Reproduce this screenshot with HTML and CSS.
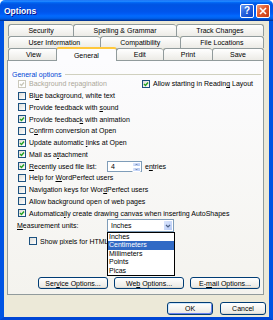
FILE: index.html
```html
<!DOCTYPE html>
<html lang="en">
<head>
  <meta charset="UTF-8" />
  <title>Options</title>
  <link rel="stylesheet" href="styles.css">
</head>
<body>
  <div class="window">
    <div class="titlebar">
      <span class="title">Options</span>
      <div class="controls">
        <span class="ctl help">?</span>
        <span class="ctl close">
          <svg width="8" height="8" viewBox="0 0 8 8"><path d="M1 1 L7 7 M7 1 L1 7" stroke="#fff" stroke-width="1.6"/></svg>
        </span>
      </div>
    </div>

    <div class="dialog">
      <div class="tabs">
        <div class="tab-row">
          <div class="tab">Security</div>
          <div class="tab">Spelling &amp; Grammar</div>
          <div class="tab">Track Changes</div>
        </div>
        <div class="tab-row">
          <div class="tab">User Information</div>
          <div class="tab">Compatibility</div>
          <div class="tab">File Locations</div>
        </div>
        <div class="tab-row">
          <div class="tab">View</div>
          <div class="tab active">General</div>
          <div class="tab">Edit</div>
          <div class="tab">Print</div>
          <div class="tab">Save</div>
        </div>
      </div>

      <div class="panel">
        <div class="group-label"><span>General options</span><span class="rule"></span></div>

        <div class="checks">
          <div class="row split">
            <label class="check disabled"><span class="box"><svg viewBox="0 0 6 6"><path d="M1 3 L2.5 4.5 L5 1.5"/></svg></span><span>Background repagination</span></label>
            <label class="check"><span class="box"><svg viewBox="0 0 6 6"><path d="M1 3 L2.5 4.5 L5 1.5"/></svg></span><span>Allow starting in Readin<u>g</u> Layout</span></label>
          </div>
          <div class="row"><label class="check"><span class="box"></span><span>Bl<u>u</u>e background, white text</span></label></div>
          <div class="row"><label class="check"><span class="box"></span><span>Provide feedback with <u>s</u>ound</span></label></div>
          <div class="row"><label class="check"><span class="box"><svg viewBox="0 0 6 6"><path d="M1 3 L2.5 4.5 L5 1.5"/></svg></span><span>Provide feedbac<u>k</u> with animation</span></label></div>
          <div class="row"><label class="check"><span class="box"></span><span>C<u>o</u>nfirm conversion at Open</span></label></div>
          <div class="row"><label class="check"><span class="box"><svg viewBox="0 0 6 6"><path d="M1 3 L2.5 4.5 L5 1.5"/></svg></span><span>Update automatic <u>l</u>inks at Open</span></label></div>
          <div class="row"><label class="check"><span class="box"><svg viewBox="0 0 6 6"><path d="M1 3 L2.5 4.5 L5 1.5"/></svg></span><span>Mail as a<u>t</u>tachment</span></label></div>
          <div class="row">
            <label class="check recent"><span class="box"><svg viewBox="0 0 6 6"><path d="M1 3 L2.5 4.5 L5 1.5"/></svg></span><span><u>R</u>ecently used file list:</span></label>
            <div class="spin">
              <span class="spin-value">4</span>
              <span class="spin-btns">
                <span class="spin-btn"><svg viewBox="0 0 6 4"><path d="M1.5 3 L3 1.5 L4.5 3"/></svg></span>
                <span class="spin-btn"><svg viewBox="0 0 6 4"><path d="M1.5 1 L3 2.5 L4.5 1"/></svg></span>
              </span>
            </div>
            <span class="after">e<u>n</u>tries</span>
          </div>
          <div class="row"><label class="check"><span class="box"></span><span>Help for <u>W</u>ordPerfect users</span></label></div>
          <div class="row"><label class="check"><span class="box"></span><span>Navigation keys for Wor<u>d</u>Perfect users</span></label></div>
          <div class="row"><label class="check"><span class="box"></span><span>Allow background open of web pages</span></label></div>
          <div class="row"><label class="check"><span class="box"><svg viewBox="0 0 6 6"><path d="M1 3 L2.5 4.5 L5 1.5"/></svg></span><span>Automatica<u>l</u>ly create drawing canvas when inserting AutoShapes</span></label></div>
        </div>

        <div class="measure">
          <span class="measure-label"><u>M</u>easurement units:</span>
          <div class="select">
            <span class="select-value">Inches</span>
            <span class="select-btn"><svg viewBox="0 0 8 6"><path d="M2 2 L4 4 L6 2"/></svg></span>
            <ul class="dropdown">
              <li>Inches</li>
              <li class="selected">Centimeters</li>
              <li>Millimeters</li>
              <li>Points</li>
              <li>Picas</li>
            </ul>
          </div>
        </div>

        <div class="row pixels"><label class="check"><span class="box"></span><span class="clip">Show pi<u>x</u>els for HTML features</span></label></div>

        <div class="panel-buttons">
          <button class="btn wide">Ser<u>v</u>ice Options...</button>
          <button class="btn wide">We<u>b</u> Options...</button>
          <button class="btn wide">E-<u>m</u>ail Options...</button>
        </div>
      </div>

      <div class="footer">
        <button class="btn default">OK</button>
        <button class="btn">Cancel</button>
      </div>
    </div>
  </div>
</body>
</html>
```

FILE: styles.css
```css
* {
  box-sizing: border-box;
}

body {
  margin: 0;
  font-family: 'Liberation Sans', Arial, sans-serif;
  font-size: 7px;
  color: #000;
  background: #fff;
}

.window {
  width: 273px;
  height: 320px;
  display: flex;
  flex-direction: column;
}

.titlebar {
  height: 21px;
  display: flex;
  align-items: center;
  justify-content: space-between;
  padding: 0 3px 0 4px;
  border-radius: 5px 5px 0 0;
  background: linear-gradient(to bottom, #0058ee 0%, #3593ff 4%, #288eff 6%, #127dff 8%, #036ffc 10%, #0262ee 14%, #0057e5 20%, #0054e3 24%, #0055eb 56%, #005bf5 66%, #026afe 76%, #0062ef 86%, #0052d6 92%, #0040ab 94%, #003092 100%);
}

.title {
  color: #fff;
  font-weight: bold;
  font-size: 8.5px;
  text-shadow: 1px 1px #0f1089;
}

.controls {
  display: flex;
  gap: 2px;
}

.ctl {
  width: 14px;
  height: 14px;
  border: 1px solid #fff;
  border-radius: 2px;
  display: flex;
  align-items: center;
  justify-content: center;
  color: #fff;
  font-weight: bold;
  font-size: 10px;
}

.help {
  background: linear-gradient(135deg, #6d9cf5, #2663de 45%, #0c45c6);
}

.close {
  background: linear-gradient(135deg, #f0a080, #e35a2c 45%, #c53a10);
}

.dialog {
  flex: 1;
  background: #ece9d8;
  border-left: 4px solid #0054e3;
  border-right: 4px solid #0054e3;
  border-bottom: 3px solid #0046d5;
  padding: 3px 5px 0 3px;
  display: flex;
  flex-direction: column;
}

.tabs {
  margin: 0 0 0 1px;
}

.tab-row {
  display: flex;
  height: 12px;
}

.tab {
  flex: 1 1 auto;
  display: flex;
  align-items: center;
  justify-content: center;
  white-space: nowrap;
  border: 1px solid #919b9c;
  border-bottom: none;
  border-right: none;
  border-radius: 3px 3px 0 0;
  background: linear-gradient(to bottom, #fff, #ecebe6);
}

.tab:last-child {
  border-right: 1px solid #919b9c;
}

.tab.active {
  position: relative;
  z-index: 1;
  margin: -1px -1px -1px -2px;
  height: 14px;
  border-top: 2px solid #ffc83c;
  border-right: 1px solid #919b9c;
  background: #fcfcfe;
}

.panel {
  height: 235px;
  border: 1px solid #919b9c;
  background: linear-gradient(to bottom, #fcfcfe, #f4f3ee);
  display: flex;
  flex-direction: column;
}

.group-label {
  display: flex;
  align-items: center;
  height: 8px;
  margin: 9px 2px 0 4px;
  color: #0046d5;
}

.group-label .rule {
  flex: 1;
  margin-left: 4px;
  border-top: 1px solid #d0d0bf;
}

.checks {
  padding-left: 10px;
}

.row {
  height: 11.75px;
  display: flex;
  align-items: center;
  white-space: nowrap;
}

.split {
  display: grid;
  grid-template-columns: 124px auto;
  align-items: center;
}

.check {
  display: flex;
  align-items: center;
  gap: 3px;
}

.box {
  width: 8px;
  height: 8px;
  flex: none;
  border: 1px solid #1c5180;
  background: linear-gradient(135deg, #dcdcd7, #fff);
  display: flex;
}

.box svg {
  width: 6px;
  height: 6px;
  fill: none;
  stroke: #21a121;
  stroke-width: 1.4;
}

.disabled {
  color: #aca899;
}

.disabled .box {
  border-color: #cac8bb;
  background: #fff;
}

.disabled .box svg {
  stroke: #cac8bb;
}

.recent {
  width: 89px;
}

.spin {
  width: 35px;
  height: 11px;
  border: 1px solid #7f9db9;
  background: #fff;
  display: flex;
}

.spin-value {
  flex: 1;
  padding-left: 3px;
  line-height: 9px;
}

.spin-btns {
  width: 9px;
  display: flex;
  flex-direction: column;
}

.spin-btn {
  flex: 1;
  display: flex;
  align-items: center;
  justify-content: center;
  background: linear-gradient(135deg, #dbe6fd, #b7cbf6);
  border: 1px solid #fff;
  border-radius: 1px;
}

.spin-btn svg {
  width: 5px;
  height: 3px;
  fill: none;
  stroke: #4d6185;
  stroke-width: 1;
}

.after {
  margin-left: 3px;
}

.measure {
  display: flex;
  align-items: center;
  height: 13px;
  padding-left: 9px;
}

.measure-label {
  width: 90px;
}

.select {
  position: relative;
  width: 67px;
  height: 13px;
  border: 1px solid #7f9db9;
  background: #fff;
  display: flex;
}

.select-value {
  flex: 1;
  padding-left: 3px;
  line-height: 11px;
}

.select-btn {
  width: 10px;
  display: flex;
  align-items: center;
  justify-content: center;
  background: linear-gradient(135deg, #dbe6fd, #b7cbf6);
  border: 1px solid #fff;
  border-radius: 1px;
}

.select-btn svg {
  width: 8px;
  height: 6px;
  fill: none;
  stroke: #4d6185;
  stroke-width: 1.2;
}

.dropdown {
  position: absolute;
  top: 12px;
  left: -1px;
  width: 68px;
  margin: 0;
  padding: 0;
  list-style: none;
  background: #fff;
  border: 1px solid #000;
  z-index: 2;
}

.dropdown li {
  height: 8.4px;
  line-height: 8.4px;
  padding-left: 1px;
  overflow: hidden;
}

.dropdown li.selected {
  background: #316ac5;
  color: #fff;
}

.pixels {
  margin-top: 3px;
  height: 12px;
  padding-left: 21px;
}

.clip {
  width: 67px;
  overflow: hidden;
}

.panel-buttons {
  display: flex;
  gap: 6px;
  margin-top: 30px;
  padding-left: 30px;
}

.btn {
  font: inherit;
  color: #000;
  height: 12px;
  padding: 0;
  border: 1px solid #003c74;
  border-radius: 3px;
  background: linear-gradient(to bottom, #fff, #ecebe6 86%, #d6d0c5);
}

.wide {
  width: 70px;
}

.footer {
  display: flex;
  justify-content: flex-end;
  gap: 7px;
  padding: 7px 0 0 0;
  margin-right: -2px;
}

.footer .btn {
  width: 46px;
  height: 13px;
}

.default {
  box-shadow: inset 1px 1px #cee7ff, inset -1px -1px #6982ee;
}
```
